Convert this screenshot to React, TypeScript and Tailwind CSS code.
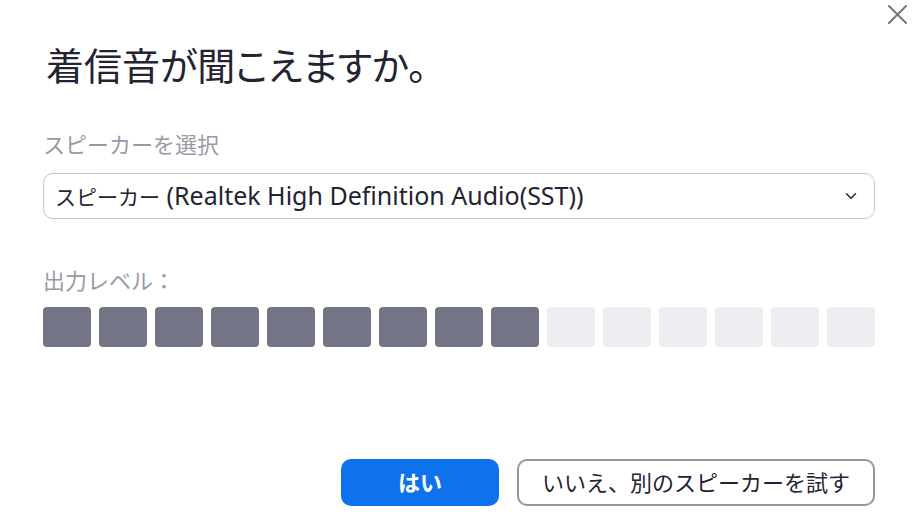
import { ChevronDown } from 'lucide-react';

const font = { fontFamily: '"Noto Sans", "Noto Sans CJK JP", sans-serif' };

export default function App() {
  const level = 9;
  const bars = Array.from({ length: 15 }, (_, i) => i < level);

  return (
    <div className="relative w-[918px] h-[516px] bg-white text-[#232333] overflow-hidden" style={font}>
      <button className="absolute left-[887px] top-[4px] text-[#6e7680]">
        <svg width="21" height="21" viewBox="0 0 21 21" fill="none" stroke="currentColor" strokeWidth="2" strokeLinecap="round">
          <path d="M2 2 L19 19 M19 2 L2 19" />
        </svg>
      </button>

      <div className="flex flex-col h-full px-[43px]">
        <h1 className="mt-[41px] ml-[3px] text-[38px] leading-[48px] text-[#232333]" style={{ fontFeatureSettings: '"palt"' }}>
          着信音が聞こえますか。
        </h1>

        <div className="mt-[40px] text-[22px] leading-[30px] text-[#9a9aa6]">スピーカーを選択</div>
        <div className="mt-[14px] h-[46px] flex items-center justify-between rounded-[10px] border border-[#c4c4d2] pl-[11px] pr-[14px]">
          <span className="text-[#232333] whitespace-nowrap">
            <span className="text-[21px]">スピーカー</span>
            <span className="text-[25px]"> (Realtek High Definition Audio(SST))</span>
          </span>
          <ChevronDown size={18} strokeWidth={2} className="text-[#232333]" />
        </div>

        <div className="mt-[46px] text-[22px] leading-[30px] text-[#9a9aa6]">出力レベル：</div>
        <div className="mt-[12px] flex gap-[8px]">
          {bars.map((on, i) => (
            <div key={i} className={`w-[48px] h-[40px] rounded-[4px] ${on ? 'bg-[#747487]' : 'bg-[#ededf1]'}`} />
          ))}
        </div>

        <div className="mt-auto mb-[10px] flex justify-end gap-[18px]">
          <button className="w-[158px] h-[47px] rounded-[10px] bg-[#0e72ed] text-white text-[22px] font-bold">はい</button>
          <button className="w-[358px] h-[47px] rounded-[10px] border-2 border-[#98989c] bg-white text-[22px] text-[#232333]">いいえ、別のスピーカーを試す</button>
        </div>
      </div>
    </div>
  );
}
